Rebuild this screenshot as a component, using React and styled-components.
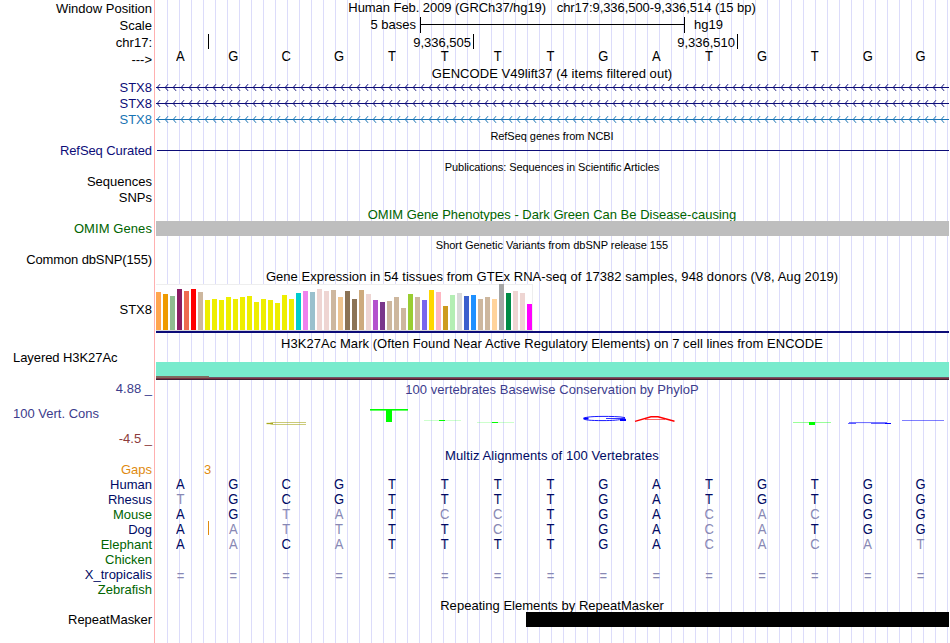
import React from "react";
import styled, { createGlobalStyle } from "styled-components";

const NAVY = "#0c0c78";
const GREEN = "#006400";
const ALIGN = "#000a64";

const tissues = [
  [38, "#ffa54f"], [36, "#ee9a00"], [34, "#8fbc8f"], [41, "#8b1c62"], [39, "#ee6a50"],
  [41, "#ff0000"], [38, "#cdb79e"], [30, "#eeee00"], [31, "#eeee00"], [30, "#eeee00"],
  [33, "#eeee00"], [31, "#eeee00"], [33, "#eeee00"], [34, "#eeee00"], [28, "#eeee00"],
  [31, "#eeee00"], [30, "#eeee00"], [27, "#eeee00"], [35, "#eeee00"], [31, "#eeee00"],
  [37, "#00cdcd"], [39, "#ee82ee"], [38, "#9ac0cd"], [41, "#eed5d2"], [39, "#eed5d2"],
  [40, "#cdb79e"], [33, "#eec591"], [39, "#8b7355"], [31, "#8b7355"], [40, "#cdaa7d"],
  [36, "#eed5d2"], [30, "#b452cd"], [28, "#7a378b"], [29, "#cdb79e"], [33, "#cdb79e"],
  [22, "#cdb79e"], [36, "#9acd32"], [33, "#cdb79e"], [30, "#7a67ee"], [40, "#ffd700"],
  [38, "#ffb6c1"], [24, "#cd9b1d"], [35, "#b4eeb4"], [37, "#d9d9d9"], [34, "#3a5fcd"],
  [35, "#1e90ff"], [31, "#cdb79e"], [33, "#cdb79e"], [31, "#ffd39b"], [46, "#a6a6a6"],
  [37, "#008b45"], [39, "#eed5d2"], [37, "#eed5d2"], [26, "#ff00ff"],
];

// lower case = base differs from human
const species = [
  { name: "Human", color: ALIGN, bases: "AGCGTTTTGATGTGG" },
  { name: "Rhesus", color: ALIGN, bases: "tGCGTTTTGATGTGG" },
  { name: "Mouse", color: GREEN, bases: "AGtaTccTGAcacGG" },
  { name: "Dog", color: ALIGN, bases: "AattTTcTGAcaTGG", insert: true },
  { name: "Elephant", color: GREEN, bases: "AaCaTTTTGAcacat" },
  { name: "Chicken", color: GREEN, bases: "" },
  { name: "X_tropicalis", color: ALIGN, bases: "===============" },
  { name: "Zebrafish", color: GREEN, bases: "" },
];

const Track = ({ h, label, labelDrop, labelSpacing, color, left, children }) => (
  <Row h={h}>
    <Label drop={labelDrop} spacing={labelSpacing} color={color} $left={left}>
      {label}
    </Label>
    <Content>{children}</Content>
  </Row>
);

const Gene = ({ color }) => {
  let d = "";
  for (let x = 2; x < 792; x += 8) {
    d += `M${x + 3} 4.2L${x + 0.2} 7.5L${x + 3} 10.8`;
  }
  return (
    <Drawing width="794" height="16">
      <rect x="1" y="7" width="793" height="1" fill={color} />
      <path d={d} fill="none" stroke={color} strokeWidth="1" />
    </Drawing>
  );
};

const Bases = ({ seq, drop, color }) => (
  <BaseRow drop={drop}>
    {seq.split("").map((b, i) => (
      <Base key={i} color={b === b.toUpperCase() && b !== "=" ? color : "#8888b4"}>
        {b.toUpperCase()}
      </Base>
    ))}
  </BaseRow>
);

const Logo = () => (
  <Drawing width="794" height="35">
    <g fill="none" stroke="#a8a81e">
      <path d="M151 26.5H118Q112 27.5 118 28.5H151" strokeWidth="0.6" />
      <path d="M111.5 27.5H118" strokeWidth="1.3" />
    </g>
    <g fill="#00ff00">
      <rect x="215" y="13" width="38" height="1.6" />
      <rect x="231" y="13" width="6" height="13" />
      <rect x="269" y="24" width="37" height="1" opacity="0.2" />
      <rect x="284" y="24" width="6" height="1" />
      <rect x="322" y="26" width="37" height="1" opacity="0.2" />
      <rect x="337" y="26" width="6" height="1" />
      <rect x="638" y="26" width="38" height="1" opacity="0.4" />
      <rect x="654" y="26" width="6" height="3" />
    </g>
    <g fill="none" stroke="#0000ff">
      <path
        d="M470 21.6C464 20.4 455 20.4 448 20.4C434 20.4 429 21.5 429 22.6C429 24 435 24.6 448 24.6C458 24.6 464 24 468 23"
        strokeWidth="0.9"
      />
      <path d="M451 22.5H470V25" strokeWidth="0.8" />
      <path d="M428.5 22.6H433.5M465 24H471" strokeWidth="2" />
      <path d="M694 26.6H732" strokeWidth="1" opacity="0.6" />
      <path d="M693 27.5H701M716 27.5H731" strokeWidth="1" opacity="0.6" />
      <path d="M730 27.5H736" strokeWidth="1" />
      <path d="M747 24.5H789" strokeWidth="1" opacity="0.5" />
    </g>
    <g fill="none" stroke="#ff0000">
      <path d="M480 25.3L496 20.8H503L519.5 25.3" strokeWidth="1.4" />
      <path d="M490 23.5H510" strokeWidth="0.6" />
    </g>
  </Drawing>
);

const App = () => {
  return (
    <>
      <GlobalStyle />
      <Browser>
        <Track h={17} label="Window Position" labelDrop={1}>
          <Title spacing={-0.06}>
            {"Human Feb. 2009 (GRCh37/hg19)   chr17:9,336,500-9,336,514 (15 bp)"}
          </Title>
        </Track>
        <Track h={17} label="Scale" labelDrop={1}>
          <Ruler>
            <Mark width={265} gap={4}>5 bases</Mark>
            <ScaleBar />
            <Mark $left>hg19</Mark>
          </Ruler>
        </Track>
        <Track h={15} label="chr17:" labelDrop={1}>
          <Ruler drop={1}>
            <Mark width={53} />
            <Tick />
            <Mark width={264} gap={2}>9,336,505</Mark>
            <Tick />
            <Mark width={263} gap={2}>9,336,510</Mark>
            <Tick />
          </Ruler>
        </Track>
        <Track h={17} label="--->" labelDrop={3}>
          <Bases seq="AGCGTTTTGATGTGG" color="#000" />
        </Track>
        <Track h={14}>
          <Title spacing={0.05}>GENCODE V49lift37 (4 items filtered out)</Title>
        </Track>
        <Track h={16} label="STX8" color={NAVY}>
          <Gene color={NAVY} />
        </Track>
        <Track h={16} label="STX8" color={NAVY}>
          <Gene color={NAVY} />
        </Track>
        <Track h={16} label="STX8" color="#1874b4">
          <Gene color="#1874b4" />
        </Track>
        <Track h={15}>
          <Title small drop={1} spacing={-0.04}>
            RefSeq genes from NCBI
          </Title>
        </Track>
        <Track h={16} label="RefSeq Curated" labelSpacing={-0.08} color={NAVY}>
          <Band top={7} start={2} h={1} color={NAVY} />
        </Track>
        <Track h={15}>
          <Title small drop={1} spacing={-0.07}>
            Publications: Sequences in Scientific Articles
          </Title>
        </Track>
        <Track h={16} label="Sequences" />
        <Track h={16} label="SNPs" />
        <Track h={15}>
          <Title drop={1} color={GREEN}>
            OMIM Gene Phenotypes - Dark Green Can Be Disease-causing
          </Title>
        </Track>
        <Track h={15} label="OMIM Genes" labelSpacing={0.08} color={GREEN}>
          <Band start={1} h={15} color="#bebebe" />
        </Track>
        <Track h={16}>
          <Title small drop={2} spacing={-0.02}>
            Short Genetic Variants from dbSNP release 155
          </Title>
        </Track>
        <Track h={17} label="Common dbSNP(155)" labelSpacing={-0.12} />
        <Track h={15}>
          <Title spacing={0.055}>
            Gene Expression in 54 tissues from GTEx RNA-seq of 17382 samples, 948 donors (V8, Aug 2019)
          </Title>
        </Track>
        <Track h={49} label="STX8" labelDrop={18}>
          <Chart>
            {tissues.map(([value, color], i) => (
              <Bar key={i} color={color} style={{ height: value }} />
            ))}
          </Chart>
          <Band start={1} h={2} color={NAVY} />
        </Track>
        <Track h={17}>
          <Title drop={3} spacing={0.05}>
            H3K27Ac Mark (Often Found Near Active Regulatory Elements) on 7 cell lines from ENCODE
          </Title>
        </Track>
        <Track h={31} label="Layered H3K27Ac" labelSpacing={-0.07} left>
          <Signal>
            <SignalPart width={53} edge="#7f6b60" top={14} />
            <SignalPart edge="#71596a" top={15} />
          </Signal>
        </Track>
        <Track h={15} label="4.88 _" color="#3c3c8c">
          <Title drop={1} spacing={0.03} color="#3c3c8c">
            100 vertebrates Basewise Conservation by PhyloP
          </Title>
        </Track>
        <Track h={35} label="100 Vert. Cons" labelDrop={10} color="#3c3c8c" left>
          <Logo />
        </Track>
        <Track h={15} label="-4.5 _" color="#8c3c3c" />
        <Track h={16}>
          <Title drop={2} spacing={0.08} color={ALIGN}>
            Multiz Alignments of 100 Vertebrates
          </Title>
        </Track>
        <Track h={15} label="Gaps" color="#e08a10">
          <Insert>3</Insert>
        </Track>
        {species.map((s) => (
          <Track key={s.name} h={15} label={s.name} color={s.color}>
            {s.bases && (
              <Bases seq={s.bases} color={ALIGN} drop={s.bases[0] === "=" ? 2 : 0} />
            )}
            {s.insert && <InsertMark />}
          </Track>
        ))}
        <Track h={15}>
          <Title drop={1} spacing={0.03}>
            Repeating Elements by RepeatMasker
          </Title>
        </Track>
        <Track h={31} label="RepeatMasker" labelSpacing={-0.05}>
          <Band start={371} h={15} color="#000" />
        </Track>
      </Browser>
    </>
  );
};

export default App;

const GlobalStyle = createGlobalStyle`
  body {
    margin: 0;
    background: white;
    overflow: hidden;
  }
`;

const Browser = styled.div`
  width: 949px;
  height: 643px;
  font-family: "Liberation Sans", Arial, sans-serif;
  font-size: 13px;
  line-height: 15px;
  white-space: pre;
  color: black;
  background: linear-gradient(#ffb0b0, #ffb0b0) 154px 0 / 1px 100% no-repeat,
    repeating-linear-gradient(
        to right,
        #dcdcfa 0 1px,
        transparent 1px 12px
      )
      167px 0 / 782px 100% no-repeat;
`;

const onlyChildren = { shouldForwardProp: (p) => p === "children" };

const Row = styled.div.withConfig(onlyChildren)`
  display: grid;
  grid-template-columns: 155px 794px;
  height: ${(props) => props.h}px;
`;

const Label = styled.div.withConfig(onlyChildren)`
  padding: ${(props) => props.drop || 0}px 3px 0 13px;
  letter-spacing: ${(props) => props.spacing || 0}px;
  text-align: ${(props) => (props.$left ? "left" : "right")};
  color: ${(props) => props.color || "black"};
  transform: scaleY(1.05);
  transform-origin: 0 ${(props) => 12 + (props.drop || 0)}px;
`;

const Content = styled.div`
  min-width: 0;
`;

const Title = styled.div.withConfig(onlyChildren)`
  padding-top: ${(props) => props.drop || 0}px;
  font-size: ${(props) => (props.small ? 11 : 13)}px;
  letter-spacing: ${(props) => props.spacing || 0}px;
  text-align: center;
  color: ${(props) => props.color || "black"};
  transform: ${(props) => (props.small ? "none" : "scaleY(1.05)")};
  transform-origin: 0 ${(props) => 12 + (props.drop || 0)}px;
`;

const Drawing = styled.svg`
  display: block;
`;

const Ruler = styled.div.withConfig(onlyChildren)`
  display: flex;
  height: 16px;

  > span {
    padding-top: ${(props) => props.drop || 0}px;
  }
`;

const Mark = styled.span.withConfig(onlyChildren)`
  box-sizing: border-box;
  width: ${(props) => (props.width ? props.width + "px" : "auto")};
  padding-left: ${(props) => (props.$left ? 9 : 0)}px;
  padding-right: ${(props) => props.gap || 0}px;
  text-align: right;
`;

const ScaleBar = styled.div`
  box-sizing: border-box;
  width: 265px;
  height: 16px;
  border: solid black;
  border-width: 0 1px;
  background: linear-gradient(black, black) 0 7px / 100% 1px no-repeat;
`;

const Tick = styled.div`
  width: 1px;
  height: 15px;
  background: black;
`;

const BaseRow = styled.div.withConfig(onlyChildren)`
  display: grid;
  grid-template-columns: repeat(15, 1fr);
  width: 793px;
  margin-left: -1px;
  padding-top: ${(props) => props.drop || 0}px;
`;

const Base = styled.span`
  text-align: center;
  color: ${(props) => props.color};
  transform: scaleY(1.08);
  transform-origin: 0 12px;
`;

const Band = styled.div.withConfig(onlyChildren)`
  height: ${(props) => props.h}px;
  margin-left: ${(props) => props.start}px;
  background: ${(props) => props.color};
  border-top: ${(props) => props.top || 0}px solid transparent;
  background-clip: padding-box;
  position: relative;
`;

const Chart = styled.div`
  box-sizing: border-box;
  display: flex;
  align-items: flex-end;
  gap: 2px;
  width: 377px;
  height: 47px;
  margin-left: 1px;
  background: white;
  border: solid #eee;
  border-width: 1px 1px 1px 0;
  border-bottom-color: #d8d8d8;
`;

const Bar = styled.div`
  flex: none;
  width: 5px;
  background: ${(props) => props.color};
`;

const Signal = styled.div`
  display: flex;
  padding: 12px 0 0 1px;
`;

const SignalPart = styled.div.withConfig(onlyChildren)`
  flex: ${(props) => (props.width ? `0 0 ${props.width}px` : 1)};
  height: 18px;
  background: linear-gradient(
    #78ebcd 0 ${(props) => props.top}px,
    ${(props) => props.edge} ${(props) => props.top}px 16px,
    #7c3444 16px 17px,
    #3c2032 17px
  );
`;

const Insert = styled.div`
  width: 105px;
  text-align: center;
  color: #e08a10;
`;

const InsertMark = styled.div`
  width: 1px;
  height: 14px;
  margin: -16px 0 0 53px;
  background: #e08a10;
`;
